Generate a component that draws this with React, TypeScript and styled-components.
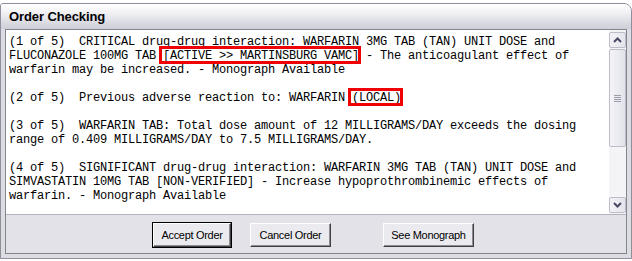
import React from 'react';
import styled, { createGlobalStyle } from 'styled-components';

const GlobalStyle = createGlobalStyle`
    html, body {
        margin: 0;
        padding: 0;
        background: #ffffff;
    }
`;

type Segment = { text: string; flagged?: boolean };

const lines: Segment[][] = [
    [{ text: '(1 of 5)  CRITICAL drug-drug interaction: WARFARIN 3MG TAB (TAN) UNIT DOSE and' }],
    [
        { text: 'FLUCONAZOLE 100MG TAB ' },
        { text: '[ACTIVE >> MARTINSBURG VAMC]', flagged: true },
        { text: ' - The anticoagulant effect of' },
    ],
    [{ text: 'warfarin may be increased. - Monograph Available' }],
    [],
    [{ text: '(2 of 5)  Previous adverse reaction to: WARFARIN ' }, { text: '(LOCAL)', flagged: true }],
    [],
    [{ text: '(3 of 5)  WARFARIN TAB: Total dose amount of 12 MILLIGRAMS/DAY exceeds the dosing' }],
    [{ text: 'range of 0.409 MILLIGRAMS/DAY to 7.5 MILLIGRAMS/DAY.' }],
    [],
    [{ text: '(4 of 5)  SIGNIFICANT drug-drug interaction: WARFARIN 3MG TAB (TAN) UNIT DOSE and' }],
    [{ text: 'SIMVASTATIN 10MG TAB [NON-VERIFIED] - Increase hypoprothrombinemic effects of' }],
    [{ text: 'warfarin. - Monograph Available' }],
];

const Arrow = ({ up }: { up?: boolean }) => (
    <svg width="9" height="6" viewBox="0 0 9 6">
        <polyline
            points={up ? '1,5 4.5,1.5 8,5' : '1,1 4.5,4.5 8,1'}
            fill="none"
            stroke="#4a4a66"
            strokeWidth="2"
        />
    </svg>
);

const App = () => {
    return (
        <>
            <GlobalStyle />
            <Window>
                <TitleBar>Order Checking</TitleBar>
                <Client>
                    <TextBox>
                        <Messages>
                            {lines.map((line, i) => (
                                <Line key={i}>
                                    {line.map((seg, j) =>
                                        seg.flagged ? (
                                            <Flag key={j}>{seg.text}</Flag>
                                        ) : (
                                            <React.Fragment key={j}>{seg.text}</React.Fragment>
                                        )
                                    )}
                                </Line>
                            ))}
                        </Messages>

                        {/* vertical scrollbar */}
                        <ScrollBar>
                            <ScrollButton>
                                <Arrow up />
                            </ScrollButton>
                            <Thumb>
                                <Grip>
                                    <span />
                                    <span />
                                    <span />
                                    <span />
                                </Grip>
                            </Thumb>
                            <Track />
                            <ScrollButton>
                                <Arrow />
                            </ScrollButton>
                        </ScrollBar>
                    </TextBox>

                    <ButtonRow>
                        <Button $isDefault>Accept Order</Button>
                        <Button $gap={19} $width={81}>
                            Cancel Order
                        </Button>
                        <Button $gap={52} $width={91}>
                            See Monograph
                        </Button>
                    </ButtonRow>
                </Client>
            </Window>
        </>
    );
};

const Window = styled.div`
    margin-top: 3px;
    width: 632px;
    height: 256px;
    box-sizing: border-box;
    border: 1px solid #8e8e9c;
    border-top-right-radius: 8px;
    border-top-left-radius: 3px;
    background: #dcdce3;
    padding: 0 4px 4px 4px;
    display: flex;
    flex-direction: column;
    overflow: hidden;
`;

const TitleBar = styled.div`
    margin: 0 -4px;
    height: 25px;
    padding: 0 8px;
    display: flex;
    align-items: center;
    background: linear-gradient(#ffffff 0%, #f1f1f4 35%, #dadae2 75%, #cfcfd9 100%);
    font-family: 'Liberation Sans', Arial, sans-serif;
    font-weight: bold;
    font-size: 13px;
    letter-spacing: -0.1px;
    color: #000000;
`;

const Client = styled.div`
    flex: 1;
    display: flex;
    flex-direction: column;
    border: 1px solid #85858f;
    background: #e3e2e8;
`;

const TextBox = styled.div`
    height: 184px;
    display: flex;
    background: #ffffff;
    border-bottom: 1px solid #b4b4bf;
`;

const Messages = styled.div`
    flex: 1;
    padding: 5px 0 0 3px;
    font-family: 'Liberation Mono', 'Courier New', monospace;
    font-size: 12px;
    letter-spacing: -0.2px;
    line-height: 14px;
    color: #000000;
    white-space: pre;
    overflow: hidden;
`;

const Line = styled.div`
    height: 14px;
`;

// red box drawn over the flagged words
const Flag = styled.span`
    position: relative;

    &::after {
        content: '';
        position: absolute;
        top: -3px;
        bottom: -1px;
        left: -4px;
        right: -2px;
        border: 3px solid #f00000;
        pointer-events: none;
    }
`;

const ScrollBar = styled.div`
    width: 17px;
    display: flex;
    flex-direction: column;
    background: #f4f4f7;
    padding: 2px 0 1px;
    box-sizing: border-box;
`;

const ScrollButton = styled.div`
    height: 16px;
    box-sizing: border-box;
    border: 1px solid #bcbcca;
    border-radius: 2px;
    background: linear-gradient(90deg, #f2f2f6, #e4e4ec);
    display: flex;
    align-items: center;
    justify-content: center;
`;

const Thumb = styled.div`
    height: 98px;
    margin-top: 1px;
    box-sizing: border-box;
    border: 1px solid #bcbcca;
    border-radius: 2px;
    background: linear-gradient(90deg, #f4f4f8, #e2e2ea);
    display: flex;
    align-items: center;
    justify-content: center;
`;

const Grip = styled.div`
    display: flex;
    flex-direction: column;
    gap: 1px;

    span {
        width: 7px;
        height: 1px;
        background: #9a9aa8;
    }
`;

const Track = styled.div`
    flex: 1;
`;

const ButtonRow = styled.div`
    flex: 1;
    display: flex;
    align-items: flex-start;
    padding: 8px 0 0 147px;
`;

const Button = styled.button<{ $isDefault?: boolean; $gap?: number; $width?: number }>`
    margin-left: ${(p) => p.$gap || 0}px;
    width: ${(p) => p.$width || 78}px;
    height: 24px;
    padding: 0;
    box-sizing: border-box;
    background: #ebeaef;
    font-family: 'Liberation Sans', Arial, sans-serif;
    font-size: 11px;
    letter-spacing: -0.3px;
    color: #000000;
    border: 1px solid;
    border-color: #ffffff #404040 #404040 #ffffff;
    box-shadow: inset -1px -1px #8c8c94;
    outline: ${(p) => (p.$isDefault ? '1px solid #000000' : 'none')};
    outline-offset: 0;
`;

export default App;
